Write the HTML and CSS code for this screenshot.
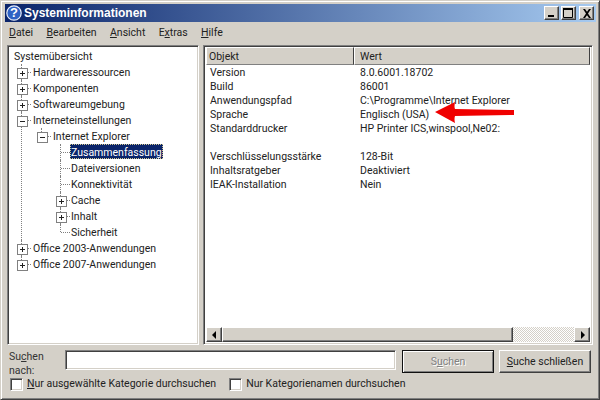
FILE: index.html
```html
<!DOCTYPE html>
<html lang="de">
<head>
<meta charset="utf-8">
<title>Systeminformationen</title>
<link rel="stylesheet" href="styles.css">
</head>
<body>
<div class="window">
  <div class="titlebar">
    <svg class="app-icon" width="16" height="16" viewBox="0 0 16 16"><circle cx="8" cy="8" r="7.2" fill="#2f62c4" stroke="#e8eefa" stroke-width="1.2"/><text x="8" y="12.4" text-anchor="middle" class="q">?</text></svg>
    <span class="title">Systeminformationen</span>
    <div class="caption-btns">
      <span class="cbtn"><svg width="10" height="10" viewBox="0 0 10 10"><rect x="1" y="7" width="6" height="2"/></svg></span>
      <span class="cbtn"><svg width="11" height="10" viewBox="0 0 11 10"><path d="M.5 1.5h9v8h-9z" fill="none" stroke="#000"/><rect x="0" y="0" width="10" height="2"/></svg></span>
      <span class="cbtn cbtn-close"><svg width="10" height="9" viewBox="0 0 10 9"><path d="M1 0h2l2 2.8L7 0h2L6 4.5 9 9H7L5 6.2 3 9H1l3-4.5z"/></svg></span>
    </div>
  </div>
  <div class="menu">
    <span><u>D</u>atei</span><span><u>B</u>earbeiten</span><span><u>A</u>nsicht</span><span>E<u>x</u>tras</span><span><u>H</u>ilfe</span>
  </div>
  <div class="panes">
    <div class="tree sunken">
      <div class="root">Systemübersicht</div>
      <ul class="lvl1">
        <li class="plus"><span>Hardwareressourcen</span></li>
        <li class="plus"><span>Komponenten</span></li>
        <li class="plus"><span>Softwareumgebung</span></li>
        <li class="minus"><span>Interneteinstellungen</span>
          <ul class="lvl2">
            <li class="minus"><span>Internet Explorer</span>
              <ul class="lvl3">
                <li><span class="selected">Zusammenfassung</span></li>
                <li><span>Dateiversionen</span></li>
                <li><span>Konnektivität</span></li>
                <li class="plus"><span>Cache</span></li>
                <li class="plus"><span>Inhalt</span></li>
                <li><span>Sicherheit</span></li>
              </ul>
            </li>
          </ul>
        </li>
        <li class="plus"><span>Office 2003-Anwendungen</span></li>
        <li class="plus"><span>Office 2007-Anwendungen</span></li>
      </ul>
    </div>
    <div class="list sunken">
      <div class="head"><div class="hcell h1">Objekt</div><div class="hcell h2">Wert</div></div>
      <div class="rows">
        <div class="row"><span>Version</span><span>8.0.6001.18702</span></div>
        <div class="row"><span>Build</span><span>86001</span></div>
        <div class="row"><span>Anwendungspfad</span><span>C:\Programme\Internet Explorer</span></div>
        <div class="row"><span>Sprache</span><span>Englisch (USA)</span></div>
        <div class="row"><span>Standarddrucker</span><span>HP Printer ICS,winspool,Ne02:</span></div>
        <div class="row"><span></span><span></span></div>
        <div class="row"><span>Verschlüsselungsstärke</span><span>128-Bit</span></div>
        <div class="row"><span>Inhaltsratgeber</span><span>Deaktiviert</span></div>
        <div class="row"><span>IEAK-Installation</span><span>Nein</span></div>
      </div>
      <div class="hscroll">
        <span class="sbtn"><svg width="5" height="8" viewBox="0 0 5 8"><path d="M4 0v8L0 4z"/></svg></span>
        <span class="thumb"></span>
        <span class="track"></span>
        <span class="sbtn"><svg width="5" height="8" viewBox="0 0 5 8"><path d="M1 0v8l4-4z"/></svg></span>
      </div>
      <svg class="arrow" width="82" height="24" viewBox="0 0 82 24"><path d="M0 11 L20 1 Q19 6 20 8 L79 9 V14 L20 15 Q19 18 20 22 Z" fill="#f00000"/></svg>
    </div>
  </div>
  <div class="search">
    <label class="search-label">Su<u>c</u>hen<br>nach:</label>
    <div class="input"></div>
    <div class="btn btn-default"><span class="disabled">S<u>u</u>chen</span></div>
    <div class="btn"><span><u>S</u>uche schließen</span></div>
  </div>
  <div class="checks">
    <span class="check"><i class="box"></i><span><u>N</u>ur ausgewählte Kategorie durchsuchen</span></span>
    <span class="check"><i class="box"></i><span>Nur Kategorienamen durchsuchen</span></span>
  </div>
</div>
</body>
</html>
```
FILE: styles.css
```css
* { box-sizing: border-box; }
html, body { margin: 0; padding: 0; width: 600px; height: 400px; overflow: hidden; }
body { font: 10.5px/14px Roboto, "Liberation Sans", Arial, sans-serif; color: #222; background: #d4d0c8; }
u { text-decoration: underline; text-underline-offset: 1px; }
ul { list-style: none; margin: 0; padding: 0; }

.window {
  width: 600px; height: 400px; display: flex; flex-direction: column;
  background: #d4d0c8; padding: 3px 3px 2px 4px;
  border: 1px solid #404040; border-top-color: #d4d0c8; border-left-color: #d4d0c8;
  box-shadow: inset 1px 1px 0 #fff, inset -1px -1px 0 #808080;
}
.titlebar {
  height: 18px; flex: none; display: flex; align-items: center; padding: 0 2px 0 1px;
  background: linear-gradient(to right, #0a246a, #a6caf0); color: #fff;
}
.app-icon { flex: none; margin-right: 2px; }
.q { font: bold 13px "Liberation Sans", sans-serif; fill: #fff; }
.title { font: bold 12px/18px "Liberation Sans", sans-serif; }
.caption-btns { margin-left: auto; display: flex; gap: 2px; }
.cbtn {
  width: 15px; height: 14px; background: #d4d0c8; display: flex; align-items: center; justify-content: center;
  border: 1px solid; border-color: #fff #404040 #404040 #fff; box-shadow: inset -1px -1px 0 #808080;
}
.cbtn-close { margin-left: 1px; }
.menu { height: 18px; flex: none; display: flex; gap: 13.3px; padding: 3px 0 0 4px; line-height: 15px; }
.panes { flex: none; height: 300px; margin: 5px 3px 0 2px; display: flex; gap: 4px; }
.sunken { border: 1px solid; border-color: #808080 #fff #fff #808080; box-shadow: inset 1px 1px 0 #404040, inset -1px -1px 0 #d4d0c8; }
.tree { width: 192px; background: #fff; padding: 2px 0 0 6px; }
.root { height: 16px; line-height: 18px; }

.lvl1 { margin-left: 7px; }
.lvl1 li { position: relative; padding-left: 11px; }
.lvl1 li > span { display: inline-block; height: 16px; line-height: 18px; padding: 0 1px; }
.lvl1 li::before { content: ""; position: absolute; left: 0; top: 0; bottom: 0; border-left: 1px dotted #808080; }
.lvl1 li:last-child::before { bottom: auto; height: 8px; }
.lvl1 li > span::before { content: ""; position: absolute; left: 1px; top: 8px; width: 9px; border-top: 1px dotted #808080; }
.lvl1 li.plus::after, .lvl1 li.minus::after {
  content: ""; position: absolute; left: -4px; top: 4px; width: 9px; height: 9px;
  border: 1px solid #808080;
  background: linear-gradient(#222, #222) center / 5px 1px no-repeat #fff;
}
.lvl1 li.plus::after {
  background:
    linear-gradient(#222, #222) center / 5px 1px no-repeat,
    linear-gradient(#222, #222) center / 1px 5px no-repeat,
    #fff;
}
.lvl1 .lvl2 { margin-left: 9px; }
.lvl1 .lvl3 { margin-left: 8px; }
.lvl1 .lvl3 > li { padding-left: 10px; }
.lvl1 .lvl3 > li > span.selected {
  background: #0a246a; color: #fff; outline: 1px dotted #d4c890; outline-offset: -1px; height: 15px; line-height: 17px; padding: 0 1px;
}

.list { flex: 1; min-width: 0; background: #fff; display: flex; flex-direction: column; padding: 1px; position: relative; }
.head { display: flex; height: 18px; flex: none; background: #d4d0c8; margin: 0 1px; }
.hcell { border: 1px solid; border-color: #fff #404040 #808080 #fff; line-height: 17px; padding-left: 2px; }
.h1 { width: 148px; }
.h2 { flex: 1; padding-left: 5px; }
.rows { flex: 1; }
.row { display: flex; height: 14px; line-height: 16px; }
.row span:first-child { width: 150px; padding-left: 5px; flex: none; }
.row span:last-child { padding-left: 5px; white-space: nowrap; }
.hscroll { display: flex; height: 15px; flex: none; margin: 0 1px 1px; }
.sbtn {
  width: 16px; flex: none; background: #d4d0c8; display: flex; align-items: center; justify-content: center;
  border: 1px solid; border-color: #fff #404040 #404040 #fff; box-shadow: inset -1px -1px 0 #808080;
}
.thumb { width: 291px; background: #d4d0c8; border: 1px solid; border-color: #fff #404040 #404040 #fff; box-shadow: inset -1px -1px 0 #808080; }
.track { flex: 1; background: repeating-conic-gradient(#fff 0 25%, #d4d0c8 0 50%) 0 0 / 2px 2px; }
.arrow { position: absolute; left: 231px; top: 55px; }

.search { flex: none; display: flex; height: 24px; margin-top: 5px; padding-left: 4px; }
.search-label { width: 56px; line-height: 14px; flex: none; color: #333; }
.input { width: 331px; height: 20px; flex: none; background: #fff; border: 1px solid; border-color: #808080 #fff #fff #808080; box-shadow: inset 1px 1px 0 #404040, inset -1px -1px 0 #d4d0c8; }
.btn {
  width: 92px; height: 23px; margin-left: 5px; padding-top: 1px; flex: none; display: flex; align-items: center; justify-content: center;
  background: #d4d0c8; border: 1px solid; border-color: #fff #404040 #404040 #fff; box-shadow: inset -1px -1px 0 #808080;
}
.btn-default { margin-left: 6px; border-color: #111; box-shadow: inset 1px 1px 0 #fff, inset -1px -1px 0 #808080; }
.disabled { color: #808080; text-shadow: 1px 1px 0 #fff; }
.checks { flex: none; display: flex; padding: 3px 0 0 5px; gap: 13px; }
.check { display: flex; align-items: center; gap: 4px; height: 14px; }
.box { width: 13px; height: 13px; flex: none; background: #fff; border: 1px solid; border-color: #808080 #fff #fff #808080; box-shadow: inset 1px 1px 0 #404040, inset -1px -1px 0 #d4d0c8; }
```
